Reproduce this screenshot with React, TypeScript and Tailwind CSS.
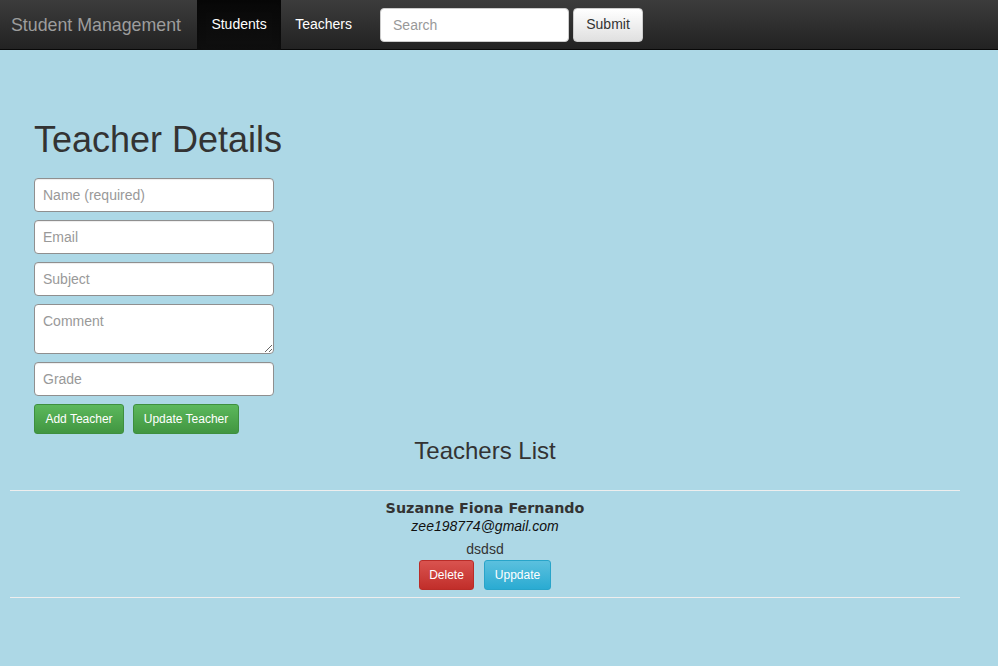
import React from "react";

export default function App() {
  const font = { fontFamily: '"Liberation Sans", Arial, sans-serif' };
  const inputCls =
    "block w-[240px] h-[34px] px-[8px] text-[14px] text-[#555] bg-white border border-[#8f8f8f] rounded-[4px] shadow-[inset_0_1px_1px_rgba(0,0,0,0.075)] placeholder:text-[#999] outline-none";
  return (
    <div className="min-h-[666px] w-full bg-[#add8e6] text-[#333]" style={font}>
      <nav className="h-[50px] flex items-center bg-[linear-gradient(to_bottom,#3c3c3c,#222)] border-b border-[#080808]">
        <div className="pl-[11px] pr-[16px] text-[17.8px] text-[#9d9d9d] leading-[50px]">Student Management</div>
        <div className="flex h-[50px]">
          <a className="h-[50px] w-[84px] flex items-center justify-center text-[14px] text-white bg-[linear-gradient(to_bottom,#080808,#0f0f0f)] shadow-[inset_0_3px_9px_rgba(0,0,0,0.25)]">Students</a>
          <a className="h-[50px] w-[85px] flex items-center justify-center text-[14px] text-white">Teachers</a>
        </div>
        <div className="flex items-center ml-[14px] gap-[4px]">
          <input className="w-[189px] h-[34px] px-[12px] text-[14px] bg-white border border-[#ccc] rounded-[4px] placeholder:text-[#999] outline-none" placeholder="Search" />
          <button className="w-[70px] h-[34px] text-[14px] text-[#333] rounded-[4px] border border-[#ccc] bg-[linear-gradient(to_bottom,#fff,#e0e0e0)]">Submit</button>
        </div>
      </nav>

      <div className="pl-[34px] pt-[70px]">
        <h1 className="text-[36px] leading-[40px] font-normal text-[#333] mb-[18px]">Teacher Details</h1>
        <div className="flex flex-col gap-[8px]">
          <input className={inputCls} placeholder="Name (required)" />
          <input className={inputCls} placeholder="Email" />
          <input className={inputCls} placeholder="Subject" />
          <textarea className="block w-[240px] h-[50px] px-[8px] pt-[6px] text-[14px] bg-white border border-[#8f8f8f] rounded-[4px] placeholder:text-[#999] outline-none resize" placeholder="Comment" />
          <input className={inputCls} placeholder="Grade" />
        </div>
        <div className="flex gap-[9px] mt-[8px]">
          <button className="h-[30px] w-[90px] text-[12px] text-white rounded-[3px] border border-[#3e8f3e] bg-[linear-gradient(to_bottom,#5cb85c,#419641)]">Add Teacher</button>
          <button className="h-[30px] w-[106px] text-[12px] text-white rounded-[3px] border border-[#3e8f3e] bg-[linear-gradient(to_bottom,#5cb85c,#419641)]">Update Teacher</button>
        </div>
      </div>

      <div className="w-[950px] ml-[10px]">
        <h2 className="text-center text-[24px] leading-[30px] font-normal text-[#333] mt-[2px] mb-[24px]">Teachers List</h2>
        <hr className="border-t border-[#eee]" />
        <div className="text-center pt-[7px] pb-[7px]">
          <div className="font-bold leading-[20px]" style={{ fontFamily: '"DejaVu Sans", Verdana, sans-serif', fontSize: 14.3 }}>Suzanne Fiona Fernando</div>
          <div className="text-[14px] italic leading-[16px] text-[#111]">zee198774@gmail.com</div>
          <div className="text-[14px] leading-[18px] mt-[6px]">dsdsd</div>
          <div className="flex justify-center gap-[10px] mt-[2px]">
            <button className="h-[30px] w-[55px] text-[12px] text-white rounded-[3px] border border-[#b92c28] bg-[linear-gradient(to_bottom,#d9534f,#c12e2a)]">Delete</button>
            <button className="h-[30px] w-[67px] text-[12px] text-white rounded-[3px] border border-[#28a4c9] bg-[linear-gradient(to_bottom,#5bc0de,#2aabd2)]">Uppdate</button>
          </div>
        </div>
        <hr className="border-t border-[#eee]" />
      </div>
    </div>
  );
}
